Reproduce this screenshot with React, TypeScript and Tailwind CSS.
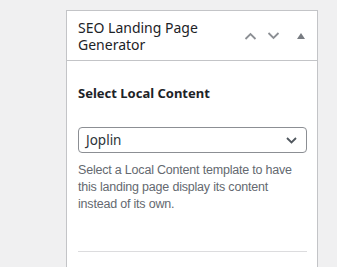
export default function App() {
  return (
    <div
      className="w-[337px] h-[267px] overflow-hidden bg-[#f0f0f1] pl-[66px] pt-[10px]"
      style={{ fontFamily: '"Noto Sans", "Open Sans", sans-serif' }}
    >
      <div className="w-[252px] h-[300px] border border-[#c3c4c7] bg-white">
        <div className="h-[50px] border-b border-[#c3c4c7] flex items-center pl-[11px]">
          <h2 className="flex-1 text-[14px] leading-[17px] text-[#1d2327]">
            <span className="block">SEO Landing Page</span>
            <span className="block">Generator</span>
          </h2>
          <div className="flex items-center">
            <button type="button" className="w-[23px] h-[24px] flex items-center justify-center">
              <svg width="13" height="8" viewBox="0 0 13 8" fill="none">
                <path d="M1.5 7L6.5 2L11.5 7" stroke="#8c8f94" strokeWidth="1.8" />
              </svg>
            </button>
            <button type="button" className="w-[23px] h-[24px] flex items-center justify-center">
              <svg width="13" height="8" viewBox="0 0 13 8" fill="none">
                <path d="M1.5 1L6.5 6L11.5 1" stroke="#8c8f94" strokeWidth="1.8" />
              </svg>
            </button>
            <button type="button" className="w-[32px] h-[24px] flex items-center justify-center">
              <svg width="8" height="6" viewBox="0 0 8 6">
                <path d="M4 0L8 6H0Z" fill="#787c82" />
              </svg>
            </button>
          </div>
        </div>
        <div className="pl-[11px] pr-[10px] pt-[24px]">
          <p className="text-[13px] leading-[16px] font-bold text-[#1d2327]">Select Local Content</p>
          <div className="mt-[26px] h-[26px] border border-[#8c8f94] rounded-[4px] flex items-center justify-between pl-[7px] pr-[9px]">
            <span className="text-[13.5px] text-[#2c3338]">Joplin</span>
            <svg width="11" height="7" viewBox="0 0 11 7" fill="none">
              <path d="M1 1L5.5 5.5L10 1" stroke="#50575e" strokeWidth="1.8" />
            </svg>
          </div>
          <p
            className="mt-[9px] text-[12.5px] tracking-[-0.2px] leading-[17px] text-[#646970]"
            style={{ fontFamily: '"Liberation Sans", Arial, sans-serif' }}
          >
            Select a Local Content template to have this landing page display its content instead of its own.
          </p>
          <div className="mt-[38px] border-t border-[#dcdcde]" />
        </div>
      </div>
    </div>
  );
}
